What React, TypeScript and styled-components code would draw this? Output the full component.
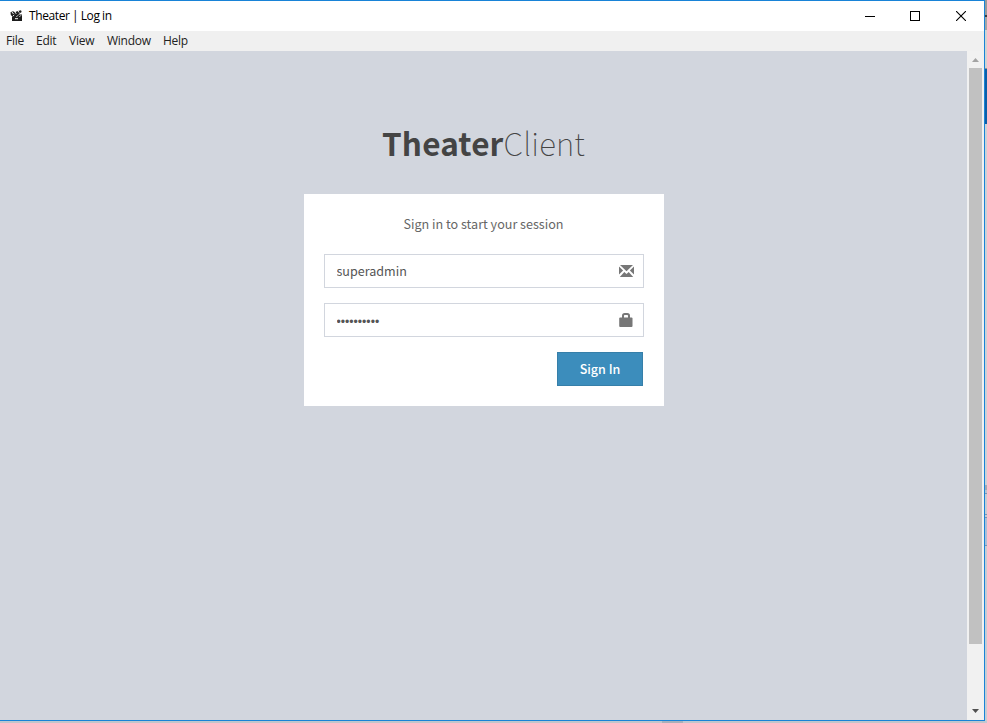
import React from "react";
import styled, { createGlobalStyle } from "styled-components";

const GlobalStyle = createGlobalStyle`
  * { box-sizing: border-box; }
  html, body { margin: 0; padding: 0; overflow: hidden; }
`;

const sourceSans = `"Noto Sans CJK SC", "Noto Sans", sans-serif`;

const Desktop = styled.div`
  width: 987px;
  height: 723px;
  display: grid;
  grid-template-columns: 985px 2px;
  grid-template-rows: 721px 2px;
  background: #c3c9d2;
  overflow: hidden;
`;

const Window = styled.div`
  display: flex;
  flex-direction: column;
  border: solid #1883d7;
  border-width: 1px 1px 1px 0;
  background: #fff;
`;

const DesktopEdge = styled.div`
  background: linear-gradient(
    #9a9a9a 0 15px, #3c3c3c 15px 17px, #a5a5a5 17px 30px, #d2d2d2 30px 68px,
    #8f9499 68px 69px, #0a5ea8 69px 124px, #cdd1d6 124px 485px, #a3abb5 485px 490px,
    #b9c4d2 490px 493px, #7b95b3 493px 494px, #c6ccd4 494px 514px, #7b95b3 514px 515px,
    #c6ccd4 515px 517px, #7b95b3 517px 518px, #adbfd6 518px 545px, #7b95b3 545px 546px, #c6ccd4 546px
  );
`;

const DesktopBottom = styled.div`
  background: linear-gradient(90deg, #c2c6cc 0 662px, #a9b0ba 662px 683px, #c2c6cc 683px);
`;

const TitleBar = styled.header`
  height: 30px;
  display: flex;
  align-items: center;
  padding-left: 9px;
  background: #fff;
`;

const WindowTitle = styled.span`
  flex: 1;
  margin-left: 6px;
  font: 12px/16px "Open Sans", sans-serif;
  letter-spacing: -0.4px;
  word-spacing: -0.2px;
  color: #000;
`;

const WindowButton = styled.span`
  width: 46px;
  height: 29px;
  display: flex;
  align-items: center;
  justify-content: center;
`;

const MenuBar = styled.nav`
  height: 20px;
  display: flex;
  background: #f0f0f0;
`;

const MenuItem = styled.span<{ $width: number }>`
  width: ${(p) => p.$width}px;
  padding-left: 6px;
  font: 12px/20px "Open Sans", sans-serif;
  letter-spacing: -0.25px;
  color: #222;
  white-space: nowrap;
`;

const Viewport = styled.div`
  flex: 1;
  display: flex;
`;

const LoginPage = styled.main`
  flex: 1;
  display: flex;
  flex-direction: column;
  align-items: center;
  background: #d2d6de;
  padding-top: 66px;
`;

const Logo = styled.h1`
  margin: 0;
  height: 50px;
  font: 100 31.5px/50px ${sourceSans};
  letter-spacing: 0.15px;
  color: #444;
  white-space: nowrap;
`;

const LogoStrong = styled.b`
  font-weight: 700;
`;

const LoginBox = styled.form`
  width: 360px;
  height: 212px;
  margin: 27px 0 0 1px;
  padding: 20px;
  display: flex;
  flex-direction: column;
  background: #fff;
`;

const LoginMessage = styled.p`
  margin: 0 1px 20px 0;
  height: 20px;
  font: 12.6px/20px ${sourceSans};
  color: #666;
  text-align: center;
`;

const Field = styled.label`
  height: 34px;
  margin-bottom: 15px;
  padding: 0 9px 0 12px;
  display: flex;
  align-items: center;
  border: 1px solid #d2d6de;
`;

const Input = styled.input`
  flex: 1;
  min-width: 0;
  height: 32px;
  margin-left: -0.5px;
  padding: 0 0 2px;
  border: 0;
  outline: 0;
  background: transparent;
  font: 12.55px/20px ${sourceSans};
  color: #555;
`;

const PasswordInput = styled(Input)`
  padding: 3px 0 0;
  font: 12.2px/20px "Liberation Sans", sans-serif;
`;

const SignInButton = styled.button`
  align-self: flex-end;
  width: 86px;
  height: 34px;
  margin-right: 1px;
  padding: 0;
  border: 1px solid #367fa9;
  background: #3c8dbc;
  font: 500 12.5px/20px ${sourceSans};
  color: #fff;
`;

const Scrollbar = styled.div`
  width: 17px;
  display: flex;
  flex-direction: column;
  align-items: center;
  background: #f1f1f1;
`;

const ScrollArrow = styled.span`
  width: 17px;
  height: 17px;
  display: flex;
  align-items: center;
  justify-content: center;
`;

const ScrollThumb = styled.div`
  width: 13px;
  height: 576px;
  margin-bottom: auto;
  background: #c1c1c1;
`;

const Icon = styled.svg`
  display: block;
  flex: none;
`;

const menus = [
  { label: "File", width: 30 },
  { label: "Edit", width: 33 },
  { label: "View", width: 38 },
  { label: "Window", width: 56 },
  { label: "Help", width: 40 },
];

const ClapperIcon = () => (
  <Icon width="14" height="14" viewBox="0 0 14 14">
    <path d="M1.5 3.2 4 2.3l2 .9 2-1 4-.9.7 1.6L9 5.5h4V12H3V7.2L1.8 6z" fill="#1c1c1c" />
    <path d="m3 3 1.5 2M6 3l1.2 1.8M9 2l1.2 1.6M3.8 7.4l1.4-1.6M7.5 7.8 9 6.3M10.5 7.8 12 6.3M6 9.7h3" stroke="#fff" strokeWidth=".95" />
  </Icon>
);

const EnvelopeIcon = () => (
  <Icon width="15" height="12" viewBox="0 0 15 12" fill="#777">
    <path d="M1 0h13L7.5 6.2zM0 1.4 4.1 5.6 0 9.6zM15 1.4v8.2l-4.1-4zM.8 12l4.5-5 2.2 2 2.2-2 4.5 5z" />
  </Icon>
);

const LockIcon = () => (
  <Icon width="15" height="14" viewBox="0 0 15 14">
    <path d="M4 6V2.7Q4 1 5.7 1h2.6Q10 1 10 2.7V6" fill="none" stroke="#777" strokeWidth="2" />
    <rect x="0.2" y="4.4" width="13.3" height="9.6" rx="1" fill="#777" />
  </Icon>
);

export default function App() {
  return (
    <>
      <GlobalStyle />
      <Desktop>
        <Window>
          <TitleBar>
            <ClapperIcon />
            <WindowTitle>Theater | Log in</WindowTitle>
            <WindowButton>
              <Icon width="10" height="11" viewBox="-1 0 10 11" overflow="visible" shapeRendering="crispEdges"><path d="M0 5.5h10" stroke="#000" /></Icon>
            </WindowButton>
            <WindowButton>
              <Icon width="10" height="10" shapeRendering="crispEdges"><path d="M.5.5h9v9h-9z" stroke="#000" fill="none" /></Icon>
            </WindowButton>
            <WindowButton>
              <Icon width="10" height="10"><path d="m0 0 10 10M10 0 0 10" stroke="#000" strokeWidth="1.1" /></Icon>
            </WindowButton>
          </TitleBar>
          <MenuBar>
            {menus.map((m) => <MenuItem key={m.label} $width={m.width}>{m.label}</MenuItem>)}
          </MenuBar>
          <Viewport>
            <LoginPage>
              <Logo><LogoStrong>Theater</LogoStrong>Client</Logo>
              <LoginBox>
                <LoginMessage>Sign in to start your session</LoginMessage>
                <Field><Input type="text" defaultValue="superadmin" /><EnvelopeIcon /></Field>
                <Field><PasswordInput type="password" defaultValue="superadmin" /><LockIcon /></Field>
                <SignInButton type="button">Sign In</SignInButton>
              </LoginBox>
            </LoginPage>
            <Scrollbar>
              <ScrollArrow><Icon width="7" height="4"><path d="M0 4 3.5 0 7 4z" fill="#a3a3a3" /></Icon></ScrollArrow>
              <ScrollThumb />
              <ScrollArrow><Icon width="7" height="5"><path d="M0 0h7L3.5 4z" fill="#505050" /></Icon></ScrollArrow>
            </Scrollbar>
          </Viewport>
        </Window>
        <DesktopEdge />
        <DesktopBottom />
      </Desktop>
    </>
  );
}
